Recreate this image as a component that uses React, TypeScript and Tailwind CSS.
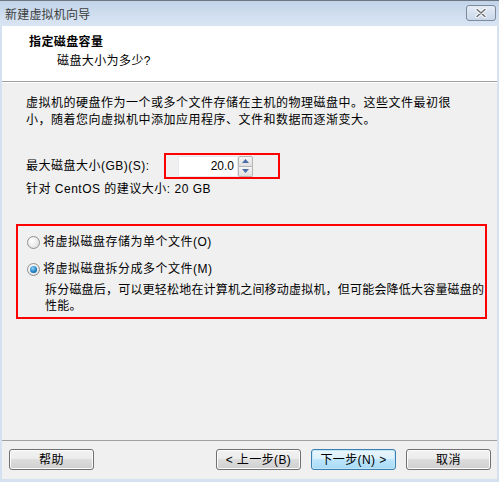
const font = "font-['Liberation_Sans','Noto_Sans_CJK_SC',sans-serif]"

function WinButton({ children, focused = false, className = '' }: { children: React.ReactNode; focused?: boolean; className?: string }) {
  return (
    <div
      className={
        'h-[21px] w-[85px] rounded-[3px] border flex items-center justify-center text-[12px] tracking-[0.4px] text-black ' +
        (focused
          ? 'border-[#3c7fb1] bg-[linear-gradient(#eaf6fd_0%,#d9f0fc_50%,#bee6fd_50%,#a7d9f5_100%)] shadow-[inset_0_0_0_1px_#c4e5f6]'
          : 'border-[#707070] bg-[linear-gradient(#f2f2f2_0%,#ebebeb_50%,#dddddd_50%,#cfcfcf_100%)] shadow-[inset_0_0_0_1px_#fcfcfc]') +
        ' ' +
        className
      }
    >
      {children}
    </div>
  )
}

function Radio({ checked }: { checked?: boolean }) {
  return (
    <div className="w-[13px] h-[13px] rounded-full border border-[#8e8f8f] bg-[radial-gradient(circle_at_35%_35%,#ffffff,#d9d9d9)] flex items-center justify-center shrink-0">
      {checked && (
        <div className="w-[7px] h-[7px] rounded-full bg-[radial-gradient(circle_at_40%_35%,#8fd3ff,#1a7cc2_60%,#0d4e86)]" />
      )}
    </div>
  )
}

export default function App() {
  return (
    <div className={`w-[499px] h-[482px] flex flex-col bg-[#d3e1f0] border-t border-[#6e7682] ${font}`}>
      {/* title bar */}
      <div className="h-[25px] flex items-center justify-between pl-[5px] pr-[3px] bg-[linear-gradient(#c2d4ea,#dae5f3)]">
        <span className="text-[12px] text-[#3c3c3c] tracking-[0.2px] mt-[3px]">新建虚拟机向导</span>
        <div className="w-[30px] h-[16px] mt-[-2px] rounded-[3px] border border-[#7d8a9a] bg-[linear-gradient(#e4ecf6,#cad8ea)] flex items-center justify-center">
          <svg width="12" height="10" viewBox="0 0 12 10">
            <path d="M2 1.5 L10 8.5 M10 1.5 L2 8.5" stroke="#ffffff" strokeWidth="3.4" strokeLinecap="round" />
            <path d="M2 1.5 L10 8.5 M10 1.5 L2 8.5" stroke="#6b6f75" strokeWidth="1.6" strokeLinecap="round" />
          </svg>
        </div>
      </div>

      <div className="flex-1 mx-[2px] mb-[3px] flex flex-col bg-[#f0f0f0]">
        {/* header */}
        <div className="h-[56px] bg-white border-b border-[#a0a0a0] pt-[8px] pl-[27px]">
          <div className="text-[12px] font-bold leading-[17px] tracking-[0.4px] text-black">指定磁盘容量</div>
          <div className="text-[12px] leading-[17px] tracking-[0.4px] text-black pl-[28px] mt-[2px]">磁盘大小为多少?</div>
        </div>

        {/* body */}
        <div className="flex-1 flex flex-col border-t border-white text-[12px] text-black tracking-[0.5px]">
          <p className="px-[24px] pt-[12px] leading-[17px]">
            虚拟机的硬盘作为一个或多个文件存储在主机的物理磁盘中。这些文件最初很小，随着您向虚拟机中添加应用程序、文件和数据而逐渐变大。
          </p>

          <div className="flex items-center mt-[24px] pl-[24px]">
            <span className="w-[138px]">最大磁盘大小(GB)(S):</span>
            <div className="border-2 border-[#ff0000] w-[116px] h-[26px] flex items-center pl-[12px]">
              <div className="w-[60px] h-[21px] bg-white border border-[#e3e9ef] flex items-center justify-end pr-[3px] tracking-normal">
                20.0
              </div>
              <div className="w-[15px] h-[21px] flex flex-col">
                <div className="flex-1 border border-[#b5b5b5] rounded-t-[2px] bg-[linear-gradient(#f6f6f6,#dedede)] flex items-center justify-center">
                  <svg width="7" height="4" viewBox="0 0 7 4"><path d="M0 4 L3.5 0 L7 4 Z" fill="#4a6fa8" /></svg>
                </div>
                <div className="flex-1 border border-t-0 border-[#b5b5b5] rounded-b-[2px] bg-[linear-gradient(#f6f6f6,#dedede)] flex items-center justify-center">
                  <svg width="7" height="4" viewBox="0 0 7 4"><path d="M0 0 L3.5 4 L7 0 Z" fill="#4a6fa8" /></svg>
                </div>
              </div>
            </div>
          </div>

          <div className="pl-[24px] mt-[2px] leading-[17px]">针对 CentOS 的建议大小: 20 GB</div>

          <div className="ml-[14px] mr-[10px] mt-[26px] border-2 border-[#ff0000] pt-[8px] pb-[3px] pl-[9px]">
            <div className="flex items-center gap-[3px] leading-[17px]">
              <Radio />
              <span>将虚拟磁盘存储为单个文件(O)</span>
            </div>
            <div className="flex items-center gap-[3px] leading-[17px] mt-[10px]">
              <Radio checked />
              <span>将虚拟磁盘拆分成多个文件(M)</span>
            </div>
            <p className="pl-[18px] mt-[4px] leading-[16px] tracking-[0.2px]">
              拆分磁盘后，可以更轻松地在计算机之间移动虚拟机，但可能会降低大容量磁盘的性能。
            </p>
          </div>
        </div>

        {/* footer */}
        <div className="h-[39px] border-t border-[#a0a0a0] flex items-start pt-[8px] pl-[7px] pr-[6px]">
          <WinButton>帮助</WinButton>
          <div className="flex-1" />
          <WinButton className="mr-[10px]">&lt; 上一步(B)</WinButton>
          <WinButton focused className="mr-[10px]">下一步(N) &gt;</WinButton>
          <WinButton>取消</WinButton>
        </div>
      </div>
    </div>
  )
}
